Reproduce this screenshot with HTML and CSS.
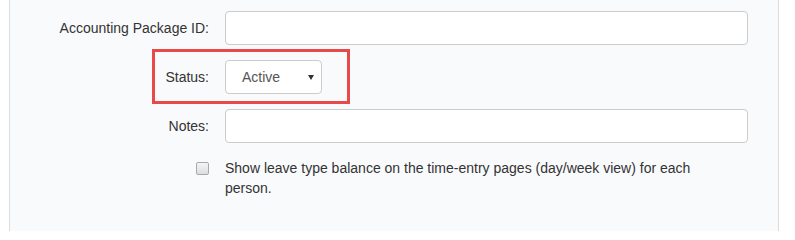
FILE: index.html
```html
<!DOCTYPE html>
<html>
<head>
<meta charset="utf-8">
<link rel="stylesheet" href="styles.css">
</head>
<body>
<div class="panel">
  <div class="row">
    <label class="lbl">Accounting Package ID:</label>
    <div class="input"></div>
  </div>
  <div class="row">
    <label class="lbl">Status:</label>
    <div class="select">
      <span class="select-text">Active</span>
      <svg class="caret" width="6" height="5" viewBox="0 0 6 5"><path d="M0 0 H6 L3 5 Z" fill="#333"/></svg>
    </div>
  </div>
  <div class="row">
    <label class="lbl">Notes:</label>
    <div class="input"></div>
  </div>
  <div class="row row-check">
    <span class="checkbox"></span>
    <div class="check-text">Show leave type balance on the time-entry pages (day/week view) for each person.</div>
  </div>
  <div class="highlight"></div>
</div>
</body>
</html>
```
FILE: styles.css
```css
html, body {
  margin: 0;
  padding: 0;
  background: #ffffff;
}
body {
  font-family: "Liberation Sans", Arial, sans-serif;
  font-size: 14px;
  color: #333333;
  height: 231px;
  overflow: hidden;
}
.panel {
  position: relative;
  margin-left: 9px;
  width: 768px;
  height: 231px;
  border-left: 1px solid #dcdcdc;
  border-right: 1px solid #dcdcdc;
  background: #f9fafc;
  padding-top: 11px;
  box-sizing: content-box;
}
.row {
  display: grid;
  grid-template-columns: 199px 523px;
  column-gap: 16px;
  align-items: center;
  margin-bottom: 15px;
}
.lbl {
  text-align: right;
  line-height: 20px;
}
.input {
  height: 34px;
  box-sizing: border-box;
  background: #ffffff;
  border: 1px solid #cccccc;
  border-radius: 4px;
}
.select {
  width: 97px;
  height: 34px;
  box-sizing: border-box;
  background: #ffffff;
  border: 1px solid #cccccc;
  border-radius: 4px;
  display: flex;
  align-items: center;
  justify-content: space-between;
  padding: 0 7px 0 16px;
  color: #555555;
  font-size: 14px;
}
.caret {
  display: block;
  margin-top: 1px;
}
.row-check {
  align-items: start;
  margin-top: 16px;
}
.checkbox {
  justify-self: end;
  width: 13px;
  height: 13px;
  box-sizing: border-box;
  margin-top: 3px;
  border: 1px solid #a9a9a9;
  border-radius: 2px;
  background: linear-gradient(#f4f4f4, #dedede);
}
.check-text {
  max-width: 495px;
  line-height: 20px;
  margin-top: -1px;
}
.highlight {
  position: absolute;
  left: 142px;
  top: 49px;
  width: 198px;
  height: 55px;
  box-sizing: border-box;
  border: 3px solid #e84a4a;
}
```
